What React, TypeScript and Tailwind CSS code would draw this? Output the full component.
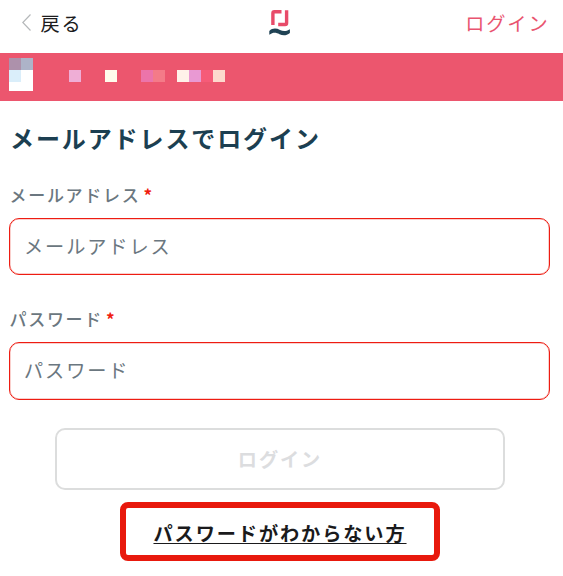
const fontStack = "font-['Noto_Sans_CJK_JP',sans-serif]";

function BrandMark() {
  return (
    <svg className="h-[30px] w-[24px]" viewBox="0 0 24 30" fill="none" aria-hidden="true">
      <path d="M4.9 17V5.2a1.5 1.5 0 0 1 1.5-1.5H13.5" stroke="#e84b69" strokeWidth="3.4" />
      <path d="M18.6 2.2V15a1.5 1.5 0 0 1-1.5 1.500H10.200" stroke="#e84b69" strokeWidth="3.4" />
      <path
        d="M1.300 23C4.500 19.800 8.500 20.200 12 22C15.500 23.800 18.500 23.300 21.900 21.200V25C18.500 27.800 15 28 11.500 26.200C8 24.300 5 24 1.300 26.800Z"
        fill="#1f4254"
      />
    </svg>
  );
}

function Header() {
  return (
    <header className="grid h-[53px] grid-cols-3 items-center bg-white pb-[7px]">
      <a href="#" className="flex items-center pl-[22px] text-[19.2px] tracking-[1.9px] text-[#1c1c1e]">
        <svg className="mr-[9.5px] h-[17px] w-[9px]" viewBox="0 0 9 17" fill="none" aria-hidden="true">
          <path d="M8.5 0.5L0.8 8.5L8.5 16.5" stroke="#b5b8ba" strokeWidth="1.2" />
        </svg>
        戻る
      </a>
      <div className="flex justify-center pr-[3px]">
        <BrandMark />
      </div>
      <a href="#" className="pr-[13.5px] text-right text-[19.2px] tracking-[1.9px] text-[#e9546f]">ログイン</a>
    </header>
  );
}

// Pixelated account name, one 12px block per entry.
const nameBlocks = [
  "bg-[#efaed6]", "", "", "bg-[#fffcec]", "", "", "bg-[#ec74aa]", "bg-[#f47b88]",
  "", "bg-[#fff1e9]", "bg-[#e999d3]", "bg-[#f65b78]", "bg-[#fdd9cd]",
];

function AccountBar() {
  return (
    <div className="flex h-12 bg-[#ec566e] pt-[5px] pl-[9px]">
      <div className="grid h-[33px] w-6 grid-cols-2 grid-rows-[12px_12px_9px]">
        <span className="bg-[#ad91ab]" />
        <span className="bg-[#adb3c8]" />
        <span className="bg-[#daeefa]" />
        <span className="bg-white" />
        <span className="col-span-2 bg-white" />
      </div>
      <div className="mt-3 ml-9 flex">
        {nameBlocks.map((color, i) => (
          <span key={i} className={`size-3 ${color}`} />
        ))}
      </div>
    </div>
  );
}

interface FieldProps {
  label: string;
  type: string;
  className: string;
  inputClassName: string;
}

function Field({ label, type, className, inputClassName }: FieldProps) {
  return (
    <label className={`block ${className}`}>
      <span className="block h-6 pl-[0.5px] text-[17px] leading-6 font-medium tracking-[1.7px] text-[#6b7780]">
        {label}
        <span className="ml-[3px] font-bold text-[#f01c10]">*</span>
      </span>
      <input
        type={type}
        placeholder={label}
        className={`mt-[11px] block w-full rounded-[10px] border border-[#ee1c12] bg-white px-[14px] pb-[2px] text-[19.2px] tracking-[1.9px] shadow-[inset_0_0_0_0.5px_#f5a09b] outline-none placeholder:text-[#6b7780] ${inputClassName}`}
      />
    </label>
  );
}

export default function App() {
  return (
    <div className={`h-[576px] w-full overflow-hidden bg-white ${fontStack}`} lang="ja">
      <Header />
      <AccountBar />
      <main className="pr-[13px] pl-[9px]">
        <h1 className="pt-[19px] pl-px text-[24px] leading-9 font-bold tracking-[1.9px] text-[#1c3f51]">メールアドレスでログイン</h1>
        <Field label="メールアドレス" type="email" className="mt-[27px]" inputClassName="h-[57px]" />
        <Field label="パスワード" type="password" className="mt-8" inputClassName="h-[58px]" />
        <button
          disabled
          className="mt-7 ml-[46px] block h-[62px] w-[450px] rounded-[10px] border-2 border-[#dcdddd] text-[19.2px] font-bold tracking-[1.9px] text-[#dcdddf]"
        >
          ログイン
        </button>
        <div className="mt-3 ml-[111px] flex h-[59px] w-[320px] items-center justify-center rounded-lg border-[6px] border-[#e8190d] pt-[3px]">
          <a href="#" className="text-[19.2px] font-bold tracking-[1.9px] whitespace-nowrap text-[#1a1a1c] underline decoration-1 underline-offset-2">
            パスワードがわからない方
          </a>
        </div>
      </main>
    </div>
  );
}
